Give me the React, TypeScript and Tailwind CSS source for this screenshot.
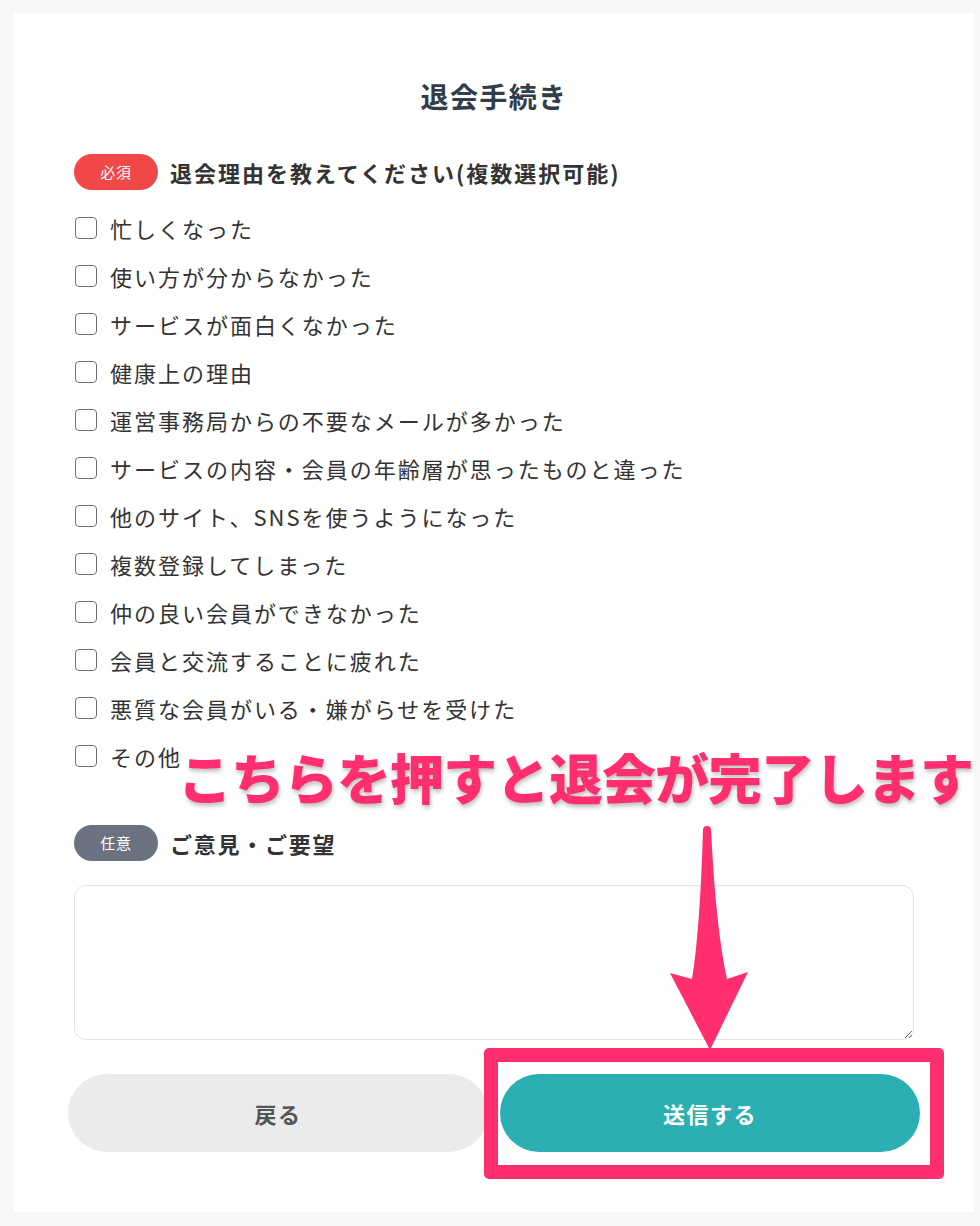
import React from 'react';

const reasons = [
  '忙しくなった',
  '使い方が分からなかった',
  'サービスが面白くなかった',
  '健康上の理由',
  '運営事務局からの不要なメールが多かった',
  'サービスの内容・会員の年齢層が思ったものと違った',
  '他のサイト、SNSを使うようになった',
  '複数登録してしまった',
  '仲の良い会員ができなかった',
  '会員と交流することに疲れた',
  '悪質な会員がいる・嫌がらせを受けた',
  'その他',
];

const font = "font-['Noto_Sans_CJK_JP','Noto_Sans',sans-serif]";

export default function App() {
  return (
    <div className={`relative min-h-[1226px] bg-[#f7f7f7] pt-[13px] ${font}`}>
      <div className="ml-[14px] w-[960px] bg-white px-[60px] pt-[64px] pb-[60px]">
        <h1 className="text-center text-[28px] leading-[38px] font-bold tracking-[0.05em] text-[#333d4a]">退会手続き</h1>

        <div className="mt-[39px] flex items-center gap-3">
          <span className="flex h-[36px] w-[84px] items-center justify-center rounded-full bg-[#f04848] text-[15px] tracking-[0.05em] text-white">必須</span>
          <span className="text-[22px] font-bold tracking-[0.09em] text-[#333]">退会理由を教えてください(複数選択可能)</span>
        </div>

        <ul className="mt-[14px]">
          {reasons.map((r) => (
            <li key={r} className="flex h-[48px] items-center gap-[13px]">
              <span className="ml-px h-[22px] w-[22px] shrink-0 rounded-[4px] border-[1.5px] border-[#707070] bg-white" />
              <span className="text-[22px] tracking-[0.09em] text-[#333]">{r}</span>
            </li>
          ))}
        </ul>

        <div className="mt-[45px] flex items-center gap-3">
          <span className="flex h-[36px] w-[84px] items-center justify-center rounded-full bg-[#6b7280] text-[15px] tracking-[0.05em] text-white">任意</span>
          <span className="text-[22px] font-bold tracking-[0.08em] text-[#333]">ご意見・ご要望</span>
        </div>

        <textarea className="mt-[24px] block h-[155px] w-full rounded-[12px] border border-[#e3e3e3] bg-white" />

        <div className="mt-[34px] -mx-[6px] flex gap-[12px]">
          <button className="h-[78px] flex-1 rounded-full bg-[#ebebeb] text-[22px] font-bold tracking-[0.07em] text-[#555]">戻る</button>
          <button className="h-[78px] flex-1 rounded-full bg-[#2bafb3] text-[22px] font-bold tracking-[0.07em] text-white">送信する</button>
        </div>
      </div>

      {/* annotation overlay */}
      <div className="pointer-events-none absolute left-[484px] top-[1048px] h-[131px] w-[460px] rounded-[5px] border-[14px] border-[#ff2e6e]" />
      <svg className="pointer-events-none absolute left-0 top-0" width="980" height="1226">
        <path
          d="M703 830 Q703 826 707 826 Q711 826 711 830 Q716 930 727 979 L748 972 L710 1050 L670 973 L692 979 Q700 930 703 830 Z"
          fill="#ff2e6e"
        />
      </svg>
      <div className="pointer-events-none absolute left-[178px] top-[742px] whitespace-nowrap text-[54px] leading-[70px] font-black tracking-[-1px] text-[#ff2e6e] [paint-order:stroke_fill] [-webkit-text-stroke:8px_white] [text-shadow:1px_3px_4px_rgba(0,0,0,0.25)]">
        こちらを押すと退会が完了します
      </div>
    </div>
  );
}
